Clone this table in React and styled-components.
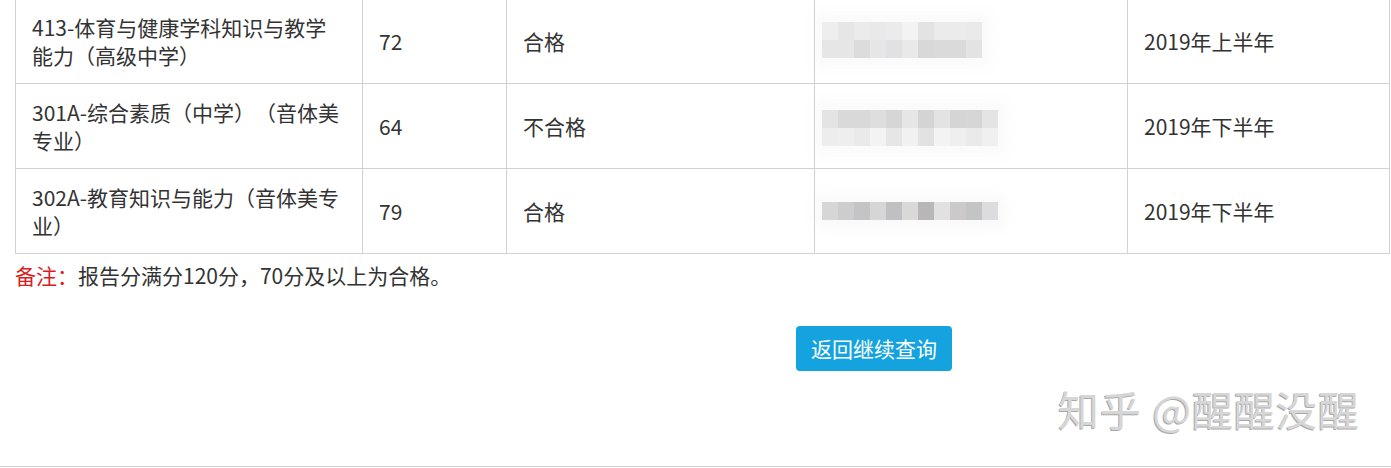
import React from "react";
import styled, { createGlobalStyle } from "styled-components";

const Global = createGlobalStyle`
  html, body { margin: 0; padding: 0; background: #fff; }
  body {
    font-family: "Noto Sans CJK SC", "Noto Sans", sans-serif;
    color: #333;
    overflow: hidden;
    text-spacing-trim: space-all;
  }
`;

const Page = styled.div`
  position: relative;
  width: 1391px;
  height: 468px;
  overflow: hidden;
  display: flex;
  flex-direction: column;
`;

const Content = styled.div`
  padding: 0 0 0 15px;
  display: flex;
  flex-direction: column;
`;

const Table = styled.table`
  margin-top: -2px;
  width: 1374px;
  border-collapse: collapse;
  table-layout: fixed;
  font-size: 21px;
  line-height: 28px;
  color: #333;
`;

const Col = styled.col`
  width: ${(p) => p.$w}px;
`;

const Cell = styled.td`
  border: 1px solid #d2d2d2;
  padding: 14px ${(p) => p.$pr || 16}px 14px 16px;
  height: 56px;
  vertical-align: middle;
  word-break: break-all;
  box-sizing: content-box;
  text-spacing-trim: space-all;
`;

const Mosaic = styled.div`
  display: grid;
  grid-template-columns: repeat(${(p) => p.$cols}, 16px);
  grid-auto-rows: 18px;
  width: max-content;
  margin-left: -9px;
  margin-top: ${(p) => p.$dy || 0}px;
  box-shadow: 0 0 14px 8px rgba(245, 245, 245, 0.6);
`;

const Pixel = styled.div`
  background: ${(p) => p.$c};
`;

const Note = styled.p`
  margin: 7px 0 0 0;
  font-size: 21px;
  line-height: 28px;
  color: #333;
  text-spacing-trim: space-all;
`;

const NoteLabel = styled.span`
  color: #d8201f;
`;

const ButtonRow = styled.div`
  display: flex;
  padding-left: 781px;
  margin-top: 37px;
`;

const Button = styled.button`
  width: 156px;
  height: 45px;
  border: none;
  border-radius: 4px;
  background: #14a3de;
  color: #fff;
  font-family: "Noto Sans CJK SC", sans-serif;
  font-size: 21px;
  line-height: 45px;
  padding: 0;
  cursor: pointer;
`;

const Footer = styled.div`
  margin-top: auto;
  height: 1px;
  margin-bottom: 1px;
  background: #cfcfcf;
`;

const Watermark = styled.div`
  position: absolute;
  left: 1058px;
  top: 384px;
  font-family: "Noto Sans CJK SC", sans-serif;
  font-size: 41px;
  line-height: 48px;
  letter-spacing: 1px;
  color: #d6d6d6;
  text-shadow: -1px 1px 0 #a9a9a9;
  white-space: nowrap;
`;

const rows = [
  {
    name: "413-体育与健康学科知识与教学能力（高级中学）",
    score: "72",
    result: "合格",
    dy: -3,
    pixels: [
      ["#eeeeee", "#e6e6e6", "#ebebeb", "#e9e9e9", "#ebebeb", "#f3f3f3", "#e3e3e3", "#ebebeb", "#ebebeb", "#eaeaea"],
      ["#e6e6e6", "#e6e6e6", "#dcdcdc", "#e6e6e6", "#e1e1e3", "#e9e9e9", "#d8d8d8", "#dadada", "#dadada", "#e3e3e3"],
    ],
    date: "2019年上半年",
  },
  {
    name: "301A-综合素质（中学）（音体美专业）",
    score: "64",
    result: "不合格",
    dy: 4,
    pixels: [
      ["#e4e4e4", "#d9d9d9", "#d9d9d9", "#dedede", "#d6d6d8", "#e6e6e6", "#d5d4d4", "#e3e3e5", "#d6d5d5", "#d6d6d6", "#e4e4e4"],
      ["#ededed", "#eeeeee", "#e9ebeb", "#f3f3f3", "#e6e6e6", "#f1f1f1", "#e2e2e2", "#f3f3f3", "#efefef", "#eaeaea", "#f0f0f0"],
    ],
    date: "2019年下半年",
  },
  {
    name: "302A-教育知识与能力（音体美专业）",
    score: "79",
    result: "合格",
    dy: 0,
    pixels: [
      ["#d6d6d6", "#cdcdcd", "#c4c4c6", "#d6d6d6", "#c0c0c2", "#d9d9d9", "#b8b7b6", "#e1e1e1", "#cccac8", "#c4c4c4", "#dcdcde"],
    ],
    date: "2019年下半年",
  },
];

export default function App() {
  return (
    <Page>
      <Global />
      <Content>
        <Table>
          <colgroup>
            <Col $w={347} />
            <Col $w={144} />
            <Col $w={308} />
            <Col $w={313} />
            <Col $w={262} />
          </colgroup>
          <tbody>
            {rows.map((r, i) => (
              <tr key={i}>
                <Cell $pr={20}>{r.name}</Cell>
                <Cell>{r.score}</Cell>
                <Cell>{r.result}</Cell>
                <Cell>
                  <Mosaic $cols={r.pixels[0].length} $dy={r.dy}>
                    {r.pixels.flat().map((c, j) => (
                      <Pixel key={j} $c={c} />
                    ))}
                  </Mosaic>
                </Cell>
                <Cell>{r.date}</Cell>
              </tr>
            ))}
          </tbody>
        </Table>
        <Note>
          <NoteLabel>备注：</NoteLabel>报告分满分120分，70分及以上为合格。
        </Note>
        <ButtonRow>
          <Button>返回继续查询</Button>
        </ButtonRow>
      </Content>
      <Footer />
      <Watermark>知乎 @醒醒没醒</Watermark>
    </Page>
  );
}
